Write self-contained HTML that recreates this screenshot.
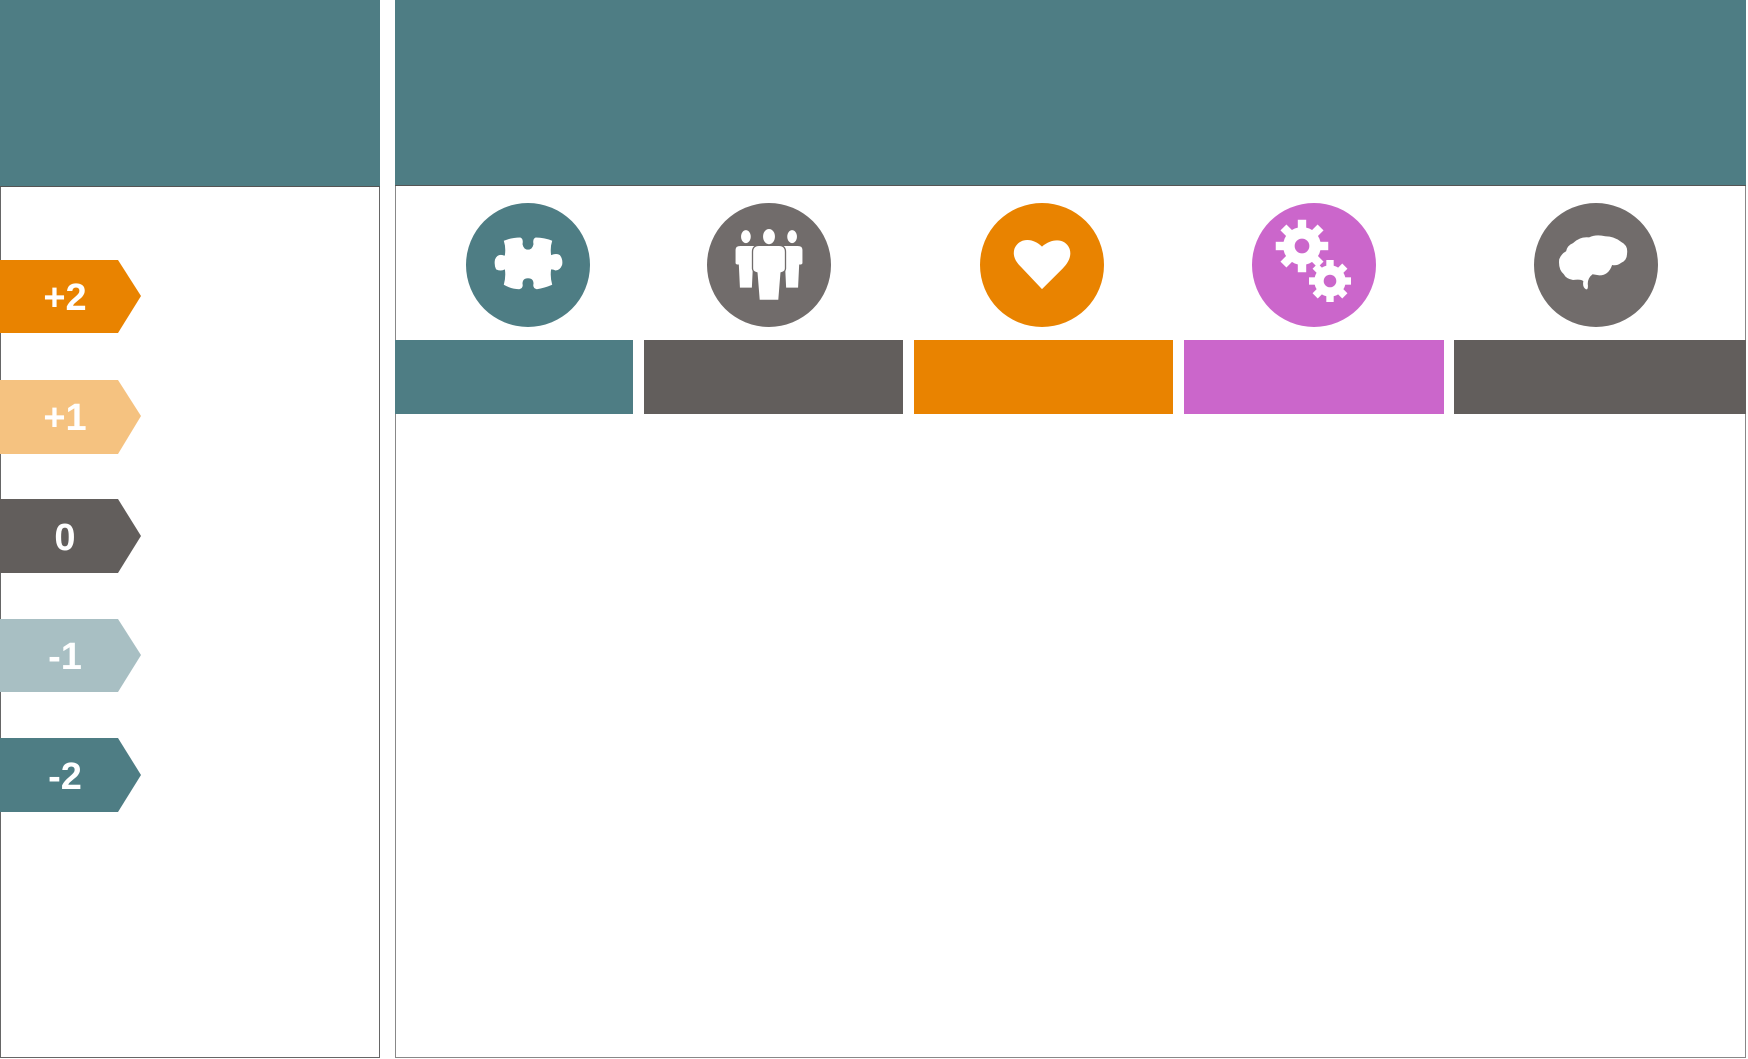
<!DOCTYPE html>
<html><head><meta charset="utf-8"><style>
html,body{margin:0;padding:0;background:#fff;width:1748px;height:1059px;overflow:hidden}
svg{display:block}
text{font-family:"Liberation Sans",sans-serif;font-weight:bold;fill:#fff}
</style></head><body>
<svg width="1748" height="1059" viewBox="0 0 1748 1059" xmlns="http://www.w3.org/2000/svg">
<rect x="0.5" y="0.5" width="379" height="1057" fill="#fff" stroke="#666" stroke-width="1"/>
<rect x="0" y="0" width="380" height="186" fill="#4e7d84"/>
<line x1="0" y1="186.5" x2="380" y2="186.5" stroke="#555" stroke-width="1"/>
<rect x="395.5" y="0.5" width="1350" height="1057" fill="#fff" stroke="#888" stroke-width="1"/>
<rect x="395" y="0" width="1351" height="185" fill="#4e7d84"/>
<line x1="395" y1="185.5" x2="1746" y2="185.5" stroke="#555" stroke-width="1"/>

<g>
<polygon points="0,260 118,260 141,296 118,333 0,333" fill="#e98300"/>
<text x="65" y="310" font-size="38" text-anchor="middle">+2</text>
<polygon points="0,380 118,380 141,416 118,454 0,454" fill="#f5c280"/>
<text x="65" y="430" font-size="38" text-anchor="middle">+1</text>
<polygon points="0,499 118,499 141,536 118,573 0,573" fill="#625e5c"/>
<text x="65" y="550" font-size="38" text-anchor="middle">0</text>
<polygon points="0,619 118,619 141,655 118,692 0,692" fill="#a8bfc3"/>
<text x="65" y="669" font-size="38" text-anchor="middle">-1</text>
<polygon points="0,738 118,738 141,775 118,812 0,812" fill="#4e7d84"/>
<text x="65" y="789" font-size="38" text-anchor="middle">-2</text>
</g>

<rect x="395" y="340" width="238" height="74" fill="#4e7d84"/>
<rect x="644" y="340" width="259" height="74" fill="#625e5c"/>
<rect x="914" y="340" width="259" height="74" fill="#e98300"/>
<rect x="1184" y="340" width="260" height="74" fill="#cb66cb"/>
<rect x="1454" y="340" width="292" height="74" fill="#625e5c"/>

<circle cx="528" cy="265" r="62" fill="#4e7d84"/>
<circle cx="769" cy="265" r="62" fill="#716c6b"/>
<circle cx="1042" cy="265" r="62" fill="#e98300"/>
<circle cx="1314" cy="265" r="62" fill="#cb66cb"/>
<circle cx="1596" cy="265" r="62" fill="#716c6b"/>

<g transform="translate(528,265) scale(1.1)" fill="#fff">
<path d="M-22,-22 Q-15,-25 -7,-25 Q-4,-24 -5,-19 Q-4,-14 0,-14 Q4,-14 5,-19 Q4,-24 7,-25 Q15,-25 22,-22 Q20,-16 21,-9 Q26,-11 29,-9 Q32,-5 31,0 Q29,5 25,5 Q23,4 21,4 Q20,11 22,18 Q15,21 8,22 Q4,21 5,17 Q5,12 0,12 Q-5,12 -5,17 Q-4,21 -8,22 Q-15,22 -22,18 Q-20,11 -21,4 Q-25,6 -29,4 Q-31,0 -30,-5 Q-28,-10 -23,-9 Q-21,-8 -21,-9 Q-20,-16 -22,-22Z"/>
</g>

<g transform="translate(769,263) scale(1.1)" fill="#fff" stroke="#716c6b" stroke-width="1.2">
<ellipse cx="-21" cy="-24" rx="5" ry="6.5"/>
<path d="M-31,-12 Q-31,-16 -26,-16 L-14,-16 Q-10,-16 -10,-12 L-10,0 Q-12,2 -14,2 L-15,23 L-27,23 L-28,2 Q-31,2 -31,0Z"/>
<ellipse cx="21" cy="-24" rx="5" ry="6.5"/>
<path d="M10,-12 Q10,-16 14,-16 L26,-16 Q31,-16 31,-12 L31,0 Q31,2 28,2 L27,23 L15,23 L14,2 Q12,2 10,0Z"/>
<ellipse cx="0" cy="-24" rx="6" ry="7.5"/>
<path d="M-15,-10 Q-15,-16 -9,-16 L9,-16 Q15,-16 15,-10 L15,5 Q15,8 11,9 L9,34 L-9,34 L-11,9 Q-15,8 -15,5Z"/>
</g>

<g transform="translate(1042,265) scale(1.15)" fill="#fff">
<path d="M0,-16 C-8,-24 -20,-24 -24,-14 C-26,-7 -22,-2 -18,2 L0,21 L18,3 C23,-2 26,-8 24,-14 C20,-24 8,-23 0,-16Z"/>
</g>

<g fill="#fff">
<g transform="translate(1302,246) scale(1.05)">
<circle r="18"/>
<g><rect x="-4" y="-25" width="8" height="50"/><rect x="-4" y="-25" width="8" height="50" transform="rotate(45)"/><rect x="-4" y="-25" width="8" height="50" transform="rotate(90)"/><rect x="-4" y="-25" width="8" height="50" transform="rotate(135)"/></g>
<circle r="7" fill="#cb66cb"/>
</g>
<g transform="translate(1330,281) scale(1.05)">
<circle r="15"/>
<g><rect x="-3.5" y="-20" width="7" height="40"/><rect x="-3.5" y="-20" width="7" height="40" transform="rotate(45)"/><rect x="-3.5" y="-20" width="7" height="40" transform="rotate(90)"/><rect x="-3.5" y="-20" width="7" height="40" transform="rotate(135)"/></g>
<circle r="6" fill="#cb66cb"/>
</g>
</g>

<g transform="translate(1596,265) scale(1.15)" fill="#fff">
<path d="M-28,8 Q-33,4 -32,-5 Q-30,-10 -26,-12 Q-25,-17 -20,-19 Q-14,-25 -6,-24 Q0,-27 8,-25 Q16,-25 22,-20 Q28,-17 27,-10 Q27,-4 22,-2 Q18,1 14,0 Q11,9 3,9 L-3,8 Q-8,12 -7,18 Q-7,22 -9,21 Q-12,19 -11,14 Q-13,12 -20,13 Q-26,12 -28,8Z"/>
</g>
</svg>
</body></html>
